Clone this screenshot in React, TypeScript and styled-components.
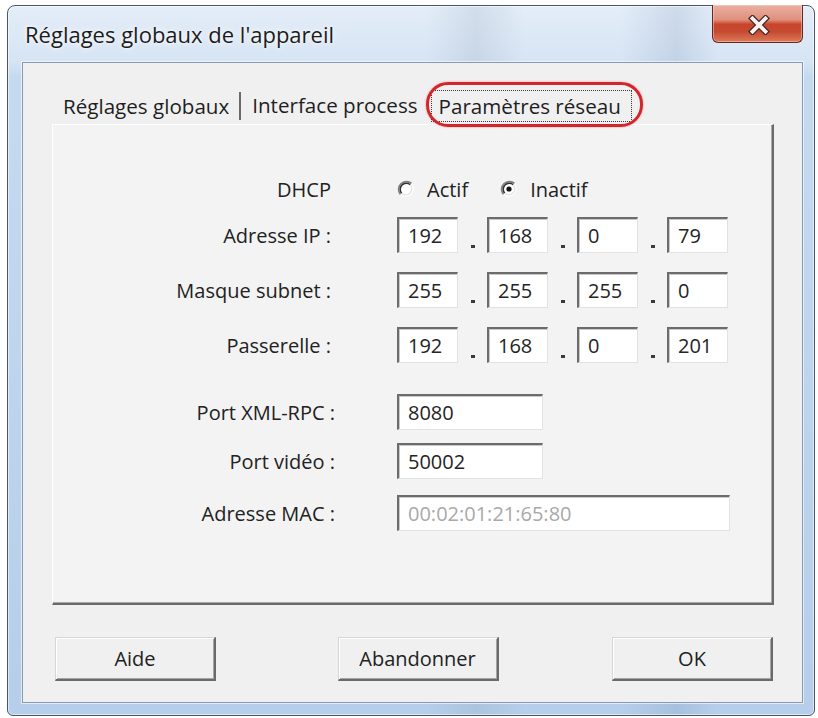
import React from "react";
import styled, { createGlobalStyle } from "styled-components";

const GlobalStyle = createGlobalStyle`
  html, body { margin: 0; padding: 0; background: #ffffff; }
  body { font-family: "Open Sans", "Noto Sans", "DejaVu Sans", sans-serif; }
  * { box-sizing: border-box; }
`;

const Screen = styled.div`
  width: 818px;
  height: 718px;
  padding: 5px 0 0 7px;
`;

const Window = styled.div`
  width: 808px;
  height: 711px;
  border: 1px solid #46566c;
  border-radius: 8px 8px 6px 6px;
  padding: 0 11px 12px 14px;
  display: flex;
  flex-direction: column;
  background:
    linear-gradient(90deg, rgba(255,255,255,0) 0%, rgba(255,255,255,0) 52%, rgba(120,140,165,0.16) 58%, rgba(255,255,255,0) 64%, rgba(255,255,255,0) 76%, rgba(90,120,160,0.16) 83%, rgba(255,255,255,0) 88%),
    linear-gradient(180deg, #e4edf8 0px, #d6e4f4 56px, #c6daef 70px, #b6cee9 100%);
  box-shadow: inset 0 0 0 1px rgba(255,255,255,0.55);
`;

const TitleBar = styled.div`
  height: 56px;
  display: flex;
  align-items: flex-start;
  justify-content: space-between;
`;

const Title = styled.div`
  margin: 14px 0 0 3px;
  font-size: 22px;
  line-height: 28px;
  color: #1c1c1c;
  text-shadow: 0 0 8px rgba(255,255,255,0.95), 0 0 3px rgba(255,255,255,0.9);
`;

const CloseButton = styled.div`
  width: 91px;
  height: 38px;
  margin-top: -1px;
  border: 1px solid #5e2a22;
  border-top: none;
  border-radius: 0 0 6px 6px;
  display: flex;
  align-items: center;
  justify-content: center;
  background: linear-gradient(180deg, #eab1a3 0%, #df8f7c 40%, #c8452c 52%, #c54a31 72%, #dd7a5a 100%);
  box-shadow: inset 0 0 0 1px rgba(255,220,210,0.45);
`;

const Client = styled.div`
  flex: 1;
  border: 1px solid #8599b3;
  background: #f0f0f0;
  padding: 23px 28px 21px 29px;
  display: flex;
  flex-direction: column;
  box-shadow: 0 0 0 1px rgba(255,255,255,0.6);
`;

const TabBar = styled.div`
  height: 38px;
  display: flex;
  align-items: stretch;
`;

const Tab = styled.div<{ $separator?: boolean; $active?: boolean }>`
  position: relative;
  display: flex;
  align-items: center;
  padding: ${(p) => (p.$active ? "4px 4px 2px 3px" : "0 10px 0 11px")};
  font-size: 20.6px;
  color: #1e1e1e;
  background: transparent;
  border-right: ${(p) => (p.$separator ? "2px solid #6a6a6a" : "none")};
  margin: ${(p) => (p.$separator ? "6px 0 4px 0" : "0")};
`;

const FocusRing = styled.span`
  height: 100%;
  display: flex;
  align-items: center;
  padding: 0 10px 0 7px;
  border: 1px dotted #3a3a3a;
`;

const Highlight = styled.span`
  position: absolute;
  inset: -4px -7px -3px -2px;
  border: 3px solid #d3262c;
  border-radius: 22px;
  box-shadow: 0 0 2px rgba(211, 38, 44, 0.5);
  pointer-events: none;
`;

const Panel = styled.div`
  height: 481px;
  background: #f3f3f3;
  border-top: 1px solid #ffffff;
  border-left: 1px solid #ffffff;
  border-right: 2px solid #6a6a6a;
  border-bottom: 2px solid #6a6a6a;
  box-shadow: inset -1px -1px 0 #a8a8a8;
  padding-top: 46px;
  display: flex;
  flex-direction: column;
`;

const FormRow = styled.div<{ $mt: number }>`
  margin-top: ${(p) => p.$mt}px;
  height: 36px;
  display: grid;
  grid-template-columns: 282px 1fr;
  column-gap: 62px;
  align-items: center;
`;

const FieldLabel = styled.div<{ $pr: number }>`
  text-align: right;
  padding-right: ${(p) => p.$pr}px;
  font-size: 20px;
  color: #222;
  white-space: nowrap;
`;

const RadioGroup = styled.div`
  display: flex;
  align-items: center;
  gap: 32px;
`;

const RadioOption = styled.label`
  display: flex;
  align-items: center;
  gap: 12px;
  font-size: 20px;
  color: #222;
`;

const IpGroup = styled.div`
  display: flex;
  align-items: stretch;
  height: 36px;
`;

const TextBox = styled.input<{ $w: number }>`
  width: ${(p) => p.$w}px;
  height: 36px;
  margin: 0;
  padding: 0 0 0 9px;
  font: inherit;
  font-size: 20px;
  color: #242424;
  -webkit-text-fill-color: #242424;
  background: #ffffff;
  border-top: 2px solid #6c6c6c;
  border-left: 2px solid #6c6c6c;
  border-right: 1px solid #e2e2e2;
  border-bottom: 1px solid #e2e2e2;
  box-shadow: inset 1px 1px 0 #c9c9c9;
  outline: none;
  &:disabled {
    color: #a9a9a9;
    -webkit-text-fill-color: #a9a9a9;
    background: #ffffff;
    opacity: 1;
  }
`;

const IpSep = styled.div`
  width: 29px;
  display: flex;
  align-items: flex-end;
  justify-content: center;
  padding-bottom: 5px;
`;

const IpDot = styled.span`
  width: 4px;
  height: 3px;
  background: #3a3a3a;
`;

const ButtonBar = styled.div`
  margin-top: 32px;
  padding: 0 1px 0 3px;
  display: flex;
  justify-content: space-between;
`;

const DialogButton = styled.button<{ $shift?: number }>`
  width: 161px;
  height: 44px;
  margin: 0 0 0 ${(p) => p.$shift ?? 0}px;
  padding: 0;
  font: inherit;
  font-size: 20px;
  color: #222;
  background: #f0f0f0;
  border-top: 1px solid #d6d6d6;
  border-left: 1px solid #d6d6d6;
  border-right: 2px solid #6a6a6a;
  border-bottom: 2px solid #6a6a6a;
  box-shadow: inset 1px 1px 0 #ffffff, inset -1px -1px 0 #a5a5a5;
`;

function RadioMark({ checked }: { checked?: boolean }) {
  return (
    <svg width="18" height="18" viewBox="0 0 18 18">
      <circle cx="9" cy="9" r="7.6" fill="#ffffff" />
      <path d="M3.5 14.5 A7.8 7.8 0 0 1 14.5 3.5" fill="none" stroke="#7c7c7c" strokeWidth="1.7" />
      <path d="M4.7 13.3 A6.1 6.1 0 0 1 13.3 4.7" fill="none" stroke="#333333" strokeWidth="1.5" />
      <path d="M14.5 3.5 A7.8 7.8 0 0 1 3.5 14.5" fill="none" stroke="#fafafa" strokeWidth="1.6" />
      <path d="M13.3 4.7 A6.1 6.1 0 0 1 4.7 13.3" fill="none" stroke="#e4e4e4" strokeWidth="1.2" />
      {checked && <circle cx="9" cy="9" r="2.6" fill="#111111" />}
    </svg>
  );
}

function CloseGlyph() {
  return (
    <svg width="22" height="20" viewBox="0 0 22 20" style={{ marginLeft: 3, marginTop: 2 }}>
      <path d="M4.5 3.5 L17.5 16.5 M17.5 3.5 L4.5 16.5" stroke="#4a2a26" strokeWidth="6.4" strokeLinecap="square" />
      <path d="M4.5 3.5 L17.5 16.5 M17.5 3.5 L4.5 16.5" stroke="#f7f2f0" strokeWidth="3.8" strokeLinecap="square" />
    </svg>
  );
}

const ipRows = [
  { label: "Adresse IP :", parts: ["192", "168", "0", "79"], mt: 10 },
  { label: "Masque subnet :", parts: ["255", "255", "255", "0"], mt: 19 },
  { label: "Passerelle :", parts: ["192", "168", "0", "201"], mt: 19 },
];

export default function App() {
  return (
    <>
      <GlobalStyle />
      <Screen>
        <Window>
          <TitleBar>
            <Title>Réglages globaux de l'appareil</Title>
            <CloseButton>
              <CloseGlyph />
            </CloseButton>
          </TitleBar>
          <Client>
            <TabBar>
              <Tab $separator>Réglages globaux</Tab>
              <Tab>Interface process</Tab>
              <Tab $active>
                <FocusRing>Paramètres réseau</FocusRing>
                <Highlight />
              </Tab>
            </TabBar>
            <Panel>
              <FormRow $mt={0}>
                <FieldLabel $pr={4}>DHCP</FieldLabel>
                <RadioGroup>
                  <RadioOption>
                    <RadioMark />
                    Actif
                  </RadioOption>
                  <RadioOption>
                    <RadioMark checked />
                    Inactif
                  </RadioOption>
                </RadioGroup>
              </FormRow>
              {ipRows.map((row) => (
                <FormRow $mt={row.mt} key={row.label}>
                  <FieldLabel $pr={4}>{row.label}</FieldLabel>
                  <IpGroup>
                    {row.parts.map((part, i) => (
                      <React.Fragment key={i}>
                        {i > 0 && (
                          <IpSep>
                            <IpDot />
                          </IpSep>
                        )}
                        <TextBox $w={61} readOnly value={part} />
                      </React.Fragment>
                    ))}
                  </IpGroup>
                </FormRow>
              ))}
              <FormRow $mt={31}>
                <FieldLabel $pr={0}>Port XML-RPC :</FieldLabel>
                <TextBox $w={146} readOnly value="8080" />
              </FormRow>
              <FormRow $mt={13}>
                <FieldLabel $pr={0}>Port vidéo :</FieldLabel>
                <TextBox $w={146} readOnly value="50002" />
              </FormRow>
              <FormRow $mt={16}>
                <FieldLabel $pr={0}>Adresse MAC :</FieldLabel>
                <TextBox $w={333} disabled value="00:02:01:21:65:80" readOnly />
              </FormRow>
            </Panel>
            <ButtonBar>
              <DialogButton>Aide</DialogButton>
              <DialogButton $shift={8}>Abandonner</DialogButton>
              <DialogButton>OK</DialogButton>
            </ButtonBar>
          </Client>
        </Window>
      </Screen>
    </>
  );
}
